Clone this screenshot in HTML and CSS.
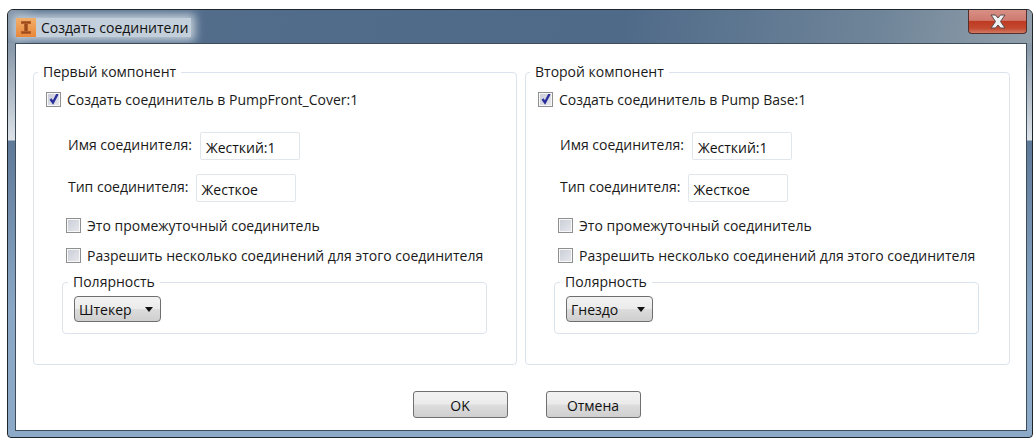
FILE: index.html
```html
<!DOCTYPE html>
<html lang="ru">
<head>
<meta charset="utf-8">
<title>Создать соединители</title>
<link rel="stylesheet" href="styles.css">
</head>
<body>
<div class="window">
  <header class="titlebar">
    <div class="title-glow">
      <svg class="app-icon" width="20" height="19" viewBox="0 0 20 19">
        <defs><linearGradient id="ig" x1="0" y1="0" x2="0" y2="1"><stop offset="0" stop-color="#f2b06c"/><stop offset="1" stop-color="#e9873a"/></linearGradient></defs>
        <rect width="20" height="19" fill="url(#ig)"/>
        <path d="M5 3h10v3h-3v7h3v3H5v-3h3V6H5z" fill="#b5602a"/>
        <path d="M9 6h2v7H9zM6 4h8v1H6zM6 14h8v1H6z" fill="#9c4a1a"/>
      </svg>
      <span class="title-text">Создать соединители</span>
    </div>
    <div class="close-btn">
      <svg width="18" height="15" viewBox="0 0 18 15">
        <path d="M2 1h4.500L9 4l2.500-3H16l-4.500 6.500L16 14h-4.500L9 11l-2.500 3H2l4.500-6.500z" fill="#eef0f2" stroke="#5a4a4a" stroke-width="1"/>
      </svg>
    </div>
  </header>
  <main class="client">
    <div class="panels">
      <fieldset class="group main-group">
        <legend>Первый компонент</legend>
        <div class="check-row top-check"><span class="box checked"><svg width="12" height="12" viewBox="0 0 12 12"><path d="M2.500 6l2.500 3.500L9.500 1" fill="none" stroke="#2a2f9c" stroke-width="2.400"/></svg></span>Создать соединитель в PumpFront_Cover:1</div>
        <div class="field-row name-row"><label>Имя соединителя:</label><span class="input">Жесткий:1</span></div>
        <div class="field-row type-row"><label>Тип соединителя:</label><span class="input">Жесткое</span></div>
        <div class="check-row sub-check first"><span class="box"></span>Это промежуточный соединитель</div>
        <div class="check-row sub-check"><span class="box"></span>Разрешить несколько соединений для этого соединителя</div>
        <fieldset class="group polarity">
          <legend>Полярность</legend>
          <div class="select">Штекер<i class="arrow"></i></div>
        </fieldset>
      </fieldset>
      <fieldset class="group main-group">
        <legend>Второй компонент</legend>
        <div class="check-row top-check"><span class="box checked"><svg width="12" height="12" viewBox="0 0 12 12"><path d="M2.500 6l2.500 3.500L9.500 1" fill="none" stroke="#2a2f9c" stroke-width="2.400"/></svg></span>Создать соединитель в Pump Base:1</div>
        <div class="field-row name-row"><label>Имя соединителя:</label><span class="input">Жесткий:1</span></div>
        <div class="field-row type-row"><label>Тип соединителя:</label><span class="input">Жесткое</span></div>
        <div class="check-row sub-check first"><span class="box"></span>Это промежуточный соединитель</div>
        <div class="check-row sub-check"><span class="box"></span>Разрешить несколько соединений для этого соединителя</div>
        <fieldset class="group polarity">
          <legend>Полярность</legend>
          <div class="select">Гнездо<i class="arrow"></i></div>
        </fieldset>
      </fieldset>
    </div>
    <div class="actions">
      <div class="btn">OK</div>
      <div class="btn">Отмена</div>
    </div>
  </main>
</div>
</body>
</html>
```
FILE: styles.css
```css
* { box-sizing: border-box; }
html, body { margin: 0; height: 100%; background: #fff; }
body {
  padding: 9px 2px 2px 7px;
  font-family: "Open Sans", "Noto Sans", sans-serif;
  font-size: 14px;
  color: #1a1a1a;
  width: 1035px;
  height: 440px;
  overflow: hidden;
}
.window {
  width: 1026px;
  height: 429px;
  border: 1px solid #1f252b;
  border-radius: 6px 6px 4px 4px;
  background: linear-gradient(180deg, #8495a7 0, #8c9bab 40px, #dce2e8 130px, #5f7998 131px, #8aa8c6 300px, #8caac8 100%);
  padding: 0 5px 6px 7px;
  display: flex;
  flex-direction: column;
}
.titlebar {
  height: 33px;
  margin: 0 -5px 0 -7px;
  padding-left: 8px;
  display: flex;
  justify-content: space-between;
  align-items: flex-start;
  border-radius: 5px 5px 0 0;
  overflow: hidden;
  background: linear-gradient(100deg, #8495a7 0, #536d8b 3%, #4f6a89 60%, #6f8599 85%, #929fab 100%);
}
.title-glow {
  display: flex;
  align-items: center;
  gap: 5px;
  height: 19px;
  margin-top: 8px;
  padding-right: 3px;
  background: #c3cfda;
  box-shadow: 0 0 10px 4px #c3cfda;
}
.title-text { font-size: 14px; color: #111; white-space: nowrap; }
.close-btn {
  width: 59px;
  height: 24px;
  margin-right: 5px;
  border: 1px solid #54302c;
  border-top: 0;
  border-radius: 0 0 4px 4px;
  background: linear-gradient(180deg, #d88f85 0%, #cf7a70 45%, #bf3a22 50%, #c24a30 80%, #d27a66 100%);
  display: flex;
  align-items: center;
  justify-content: center;
}
.client {
  flex: 1;
  background: #fff;
  border: 1px solid #3f4c59;
  padding: 19px 16px 0 17px;
  display: flex;
  flex-direction: column;
}
.panels { display: flex; gap: 8px; }
.group {
  margin: 0;
  border: 1px solid #dbe4ec;
  border-radius: 4px;
  min-width: 0;
}
.group legend {
  padding: 0 5px;
  margin-left: -8px;
  line-height: 18px;
  white-space: nowrap;
}
.main-group {
  flex: 1;
  height: 302px;
  padding: 0 0 0 12px;
}
.main-group:first-child { flex: 0 0 484px; }
.check-row {
  display: flex;
  align-items: center;
  gap: 6px;
  height: 18px;
  white-space: nowrap;
}
.top-check { margin-top: 9px; }
.box {
  width: 15px;
  height: 15px;
  flex: none;
  border: 1px solid #8e8f8f;
  outline: 1px solid #f8f8f8;
  outline-offset: -2px;
  background: linear-gradient(135deg, #c9ccd6, #e8e9ee);
  display: flex;
  align-items: center;
  justify-content: center;
}
.field-row { display: flex; align-items: center; white-space: nowrap; padding-left: 22px; }
.field-row label { position: relative; top: -2px; }
.name-row { margin-top: 24px; gap: 8px; }
.type-row { margin-top: 14px; gap: 7px; }
.input {
  width: 100px;
  height: 28px;
  border: 1px solid #e1e6ea;
  border-radius: 2px;
  background: #fff;
  padding: 5px 0 0 5px;
  color: #111;
  line-height: 20px;
}
.sub-check { padding-left: 20px; margin-top: 12px; }
.sub-check.first { margin-top: 14px; }
.polarity {
  width: 425px;
  height: 61px;
  margin: 9px 0 0 16px;
  padding: 0 0 0 11px;
}
.polarity legend { margin-left: -6px; }
.select {
  width: 87px;
  height: 26px;
  margin-top: 5px;
  border: 1px solid #6f6f6f;
  border-radius: 4px;
  background: linear-gradient(180deg, #f3f3f3 0%, #ebebeb 48%, #dcdcdc 52%, #cfcfcf 100%);
  padding-left: 4px;
  line-height: 25px;
  display: flex;
  align-items: center;
  justify-content: space-between;
  padding-right: 7px;
  color: #111;
}
.arrow {
  width: 0;
  height: 0;
  border-left: 4.500px solid transparent;
  border-right: 4.500px solid transparent;
  border-top: 5px solid #111;
}
.actions {
  display: flex;
  justify-content: center;
  gap: 38px;
  margin-top: 26px;
  padding-left: 10px;
}
.btn {
  width: 95px;
  height: 27px;
  border: 1px solid #707070;
  border-radius: 3px;
  background: linear-gradient(180deg, #f2f2f2 0%, #ebebeb 48%, #dddddd 52%, #cfcfcf 100%);
  text-align: center;
  line-height: 28px;
  color: #111;
}
```
